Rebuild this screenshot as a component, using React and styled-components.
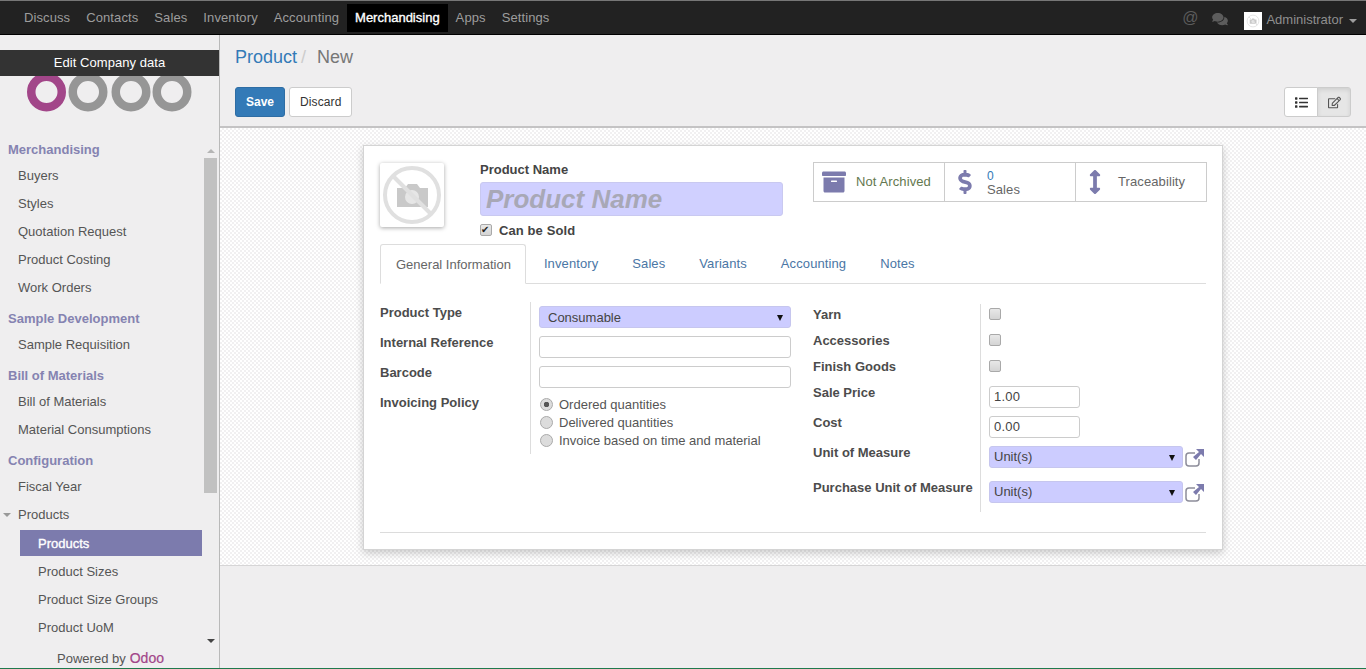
import React from 'react';
import styled, { createGlobalStyle } from 'styled-components';
import { FaArchive, FaDollarSign, FaArrowsAltV, FaList, FaRegEdit, FaComments } from 'react-icons/fa';

const GlobalStyle = createGlobalStyle`
  html, body { margin: 0; padding: 0; height: 100%; overflow: hidden; }
  body {
    font-family: "Liberation Sans", Arial, sans-serif;
    font-size: 13px;
    color: #4c4c4c;
    background: #efeeef;
  }
  * { box-sizing: border-box; }
`;

const Page = styled.div`
  height: 669px;
  display: flex;
  flex-direction: column;
  border-bottom: 1px solid #1f7a4d;
`;

const TopBar = styled.header`
  height: 35px;
  flex: none;
  display: flex;
  align-items: flex-start;
  padding: 3px 0 0 16px;
  background: #222222;
  border-top: 1px solid #777;
  border-bottom: 1px solid #000;
`;

const NavItem = styled.a`
  height: 28px;
  padding: 0 8px 2px;
  display: flex;
  align-items: center;
  font-size: 13px;
  letter-spacing: ${(p) => (p.$active ? '0' : '0.1px')};
  color: ${(p) => (p.$active ? '#fff' : '#9d9d9d')};
  background: ${(p) => (p.$active ? '#000' : 'transparent')};
  -webkit-text-stroke: ${(p) => (p.$active ? '0.35px #fff' : '0')};
`;

const UserArea = styled.div`
  margin-left: auto;
  margin-top: 5px;
  display: flex;
  align-items: center;
  color: #8f8f8f;
  padding-right: 9px;
`;

const AtSign = styled.span`
  font-size: 16px;
  color: #5c5c5c;
  margin: 0 14px 5px 0;
`;

const ChatIcon = styled(FaComments)`
  width: 16px;
  height: 14px;
  color: #5c5c5c;
  margin: 0 16px 3px 0;
`;

const Avatar = styled.span`
  width: 18px;
  height: 18px;
  background: #fff;
  display: flex;
  align-items: center;
  justify-content: center;
  margin-right: 4px;
`;

const UserName = styled.span`
  margin-bottom: 2px;
`;

const Caret = styled.span`
  margin-left: 6px;
  border-top: 4px solid #9d9d9d;
  border-left: 4px solid transparent;
  border-right: 4px solid transparent;
`;

const Body = styled.div`
  flex: 1;
  display: flex;
  min-height: 0;
`;

const Sidebar = styled.aside`
  width: 220px;
  flex: none;
  display: flex;
  flex-direction: column;
  border-right: 1px solid #b9b9b9;
`;

const LogoBox = styled.div`
  position: relative;
  height: 97px;
  flex: none;
  padding-top: 37px;
`;

const EditCompany = styled.div`
  position: absolute;
  top: 15px;
  left: 0;
  right: 0;
  height: 26px;
  padding-bottom: 2px;
  display: flex;
  align-items: center;
  justify-content: center;
  background: #333333;
  color: #fff;
  font-size: 13px;
  letter-spacing: 0.05px;
`;

const MenuRow = styled.div`
  flex: 1;
  min-height: 0;
  display: flex;
`;

const Menu = styled.nav`
  width: 204px;
  flex: none;
  overflow: hidden;
`;

const MenuHeader = styled.div`
  height: 24px;
  margin-top: 5px;
  padding-left: 8px;
  display: flex;
  align-items: center;
  font-size: 13px;
  font-weight: 700;
  color: #8583b1;
`;

const MenuItem = styled.a`
  height: 28px;
  padding-left: 18px;
  display: flex;
  align-items: center;
  position: relative;
  color: #555;
`;

const FoldCaret = styled.span`
  position: absolute;
  left: 3px;
  top: 13px;
  border-top: 4px solid #999;
  border-left: 4px solid transparent;
  border-right: 4px solid transparent;
`;

const SubItem = styled.a`
  height: ${(p) => (p.$active ? '26px' : '28px')};
  margin: ${(p) => (p.$active ? '2px 2px 1px 20px' : '0 2px 0 20px')};
  padding-left: 18px;
  display: flex;
  align-items: center;
  color: ${(p) => (p.$active ? '#fff' : '#555')};
  background: ${(p) => (p.$active ? '#7c7bad' : 'transparent')};
  -webkit-text-stroke: ${(p) => (p.$active ? '0.35px #fff' : '0')};
`;

const ScrollTrack = styled.div`
  width: 13px;
  flex: none;
  margin-top: 11px;
  display: flex;
  flex-direction: column;
  align-items: center;
`;

const ScrollArrow = styled.div`
  height: 15px;
  flex: none;
  display: flex;
  align-items: center;
  justify-content: center;
  &::before {
    content: '';
    border-left: 4px solid transparent;
    border-right: 4px solid transparent;
    ${(p) => (p.$down ? 'border-top: 4px solid #444;' : 'border-bottom: 4px solid #b5b5b5;')}
  }
`;

const ScrollThumb = styled.div`
  width: 13px;
  height: 335px;
  flex: none;
  background: #c1c1c1;
`;

const ScrollGap = styled.div`
  flex: 1;
`;

const SidebarFooter = styled.div`
  height: 20px;
  flex: none;
  display: flex;
  align-items: center;
  justify-content: center;
  gap: 4px;
  padding-left: 2px;
  color: #555;
  b { color: #a24689; font-weight: 400; font-size: 14px; -webkit-text-stroke: 0.2px #a24689; }
`;

const Main = styled.main`
  flex: 1;
  min-width: 0;
  display: flex;
  flex-direction: column;
`;

const ControlPanel = styled.div`
  height: 93px;
  flex: none;
  padding: 0 15px;
  border-bottom: 2px solid #c4c3c4;
`;

const Breadcrumb = styled.div`
  height: 44px;
  margin-bottom: 8px;
  display: flex;
  align-items: center;
  font-size: 18px;
  color: #777;
  a { color: #337ab7; }
  i { color: #ccc; font-style: normal; margin: 0 11px 0 4px; }
`;

const ActionRow = styled.div`
  display: flex;
  align-items: center;
`;

const Button = styled.button`
  height: 30px;
  padding: 0 10px;
  margin-right: 4px;
  font: inherit;
  font-size: 12px;
  letter-spacing: ${(p) => (p.$primary ? '0' : '0.1px')};
  font-weight: ${(p) => (p.$primary ? 700 : 400)};
  color: ${(p) => (p.$primary ? '#fff' : '#333')};
  background: ${(p) => (p.$primary ? '#337ab7' : '#fff')};
  border: 1px solid ${(p) => (p.$primary ? '#2e6da4' : '#ccc')};
  border-radius: 3px;
`;

const ViewSwitch = styled.div`
  margin-left: auto;
  display: flex;
`;

const ViewButton = styled.button`
  width: 34px;
  height: 30px;
  display: flex;
  align-items: center;
  justify-content: center;
  color: ${(p) => (p.$active ? '#555' : '#333')};
  background: ${(p) => (p.$active ? '#e6e6e6' : '#fff')};
  border: 1px solid #ccc;
  border-radius: ${(p) => (p.$active ? '0 3px 3px 0' : '3px 0 0 3px')};
  margin-left: ${(p) => (p.$active ? '-1px' : '0')};
  box-shadow: ${(p) => (p.$active ? 'inset 0 2px 4px rgba(0,0,0,.1)' : 'none')};
`;

const FormBackground = styled.div`
  height: 438px;
  flex: none;
  padding: 17px 0 0;
  border-bottom: 1px solid #d6d5d6;
  background-color: #fff;
  background-image: repeating-conic-gradient(#f1f0f1 0 25%, #fff 0 50%);
  background-size: 4px 4px;
`;

const Sheet = styled.div`
  width: 860px;
  height: 405px;
  margin: 0 auto;
  padding: 16px 15px 0 16px;
  background: #fff;
  border: 1px solid #d4d4d4;
  box-shadow: 0 3px 8px rgba(0, 0, 0, 0.2);
`;

const SheetHead = styled.div`
  display: flex;
  align-items: flex-start;
  height: 82px;
`;

const ImageBox = styled.div`
  width: 64px;
  height: 64px;
  margin-top: 1px;
  background: #fff;
  border-radius: 2px;
  box-shadow: 0 1px 4px rgba(0, 0, 0, 0.35);
  flex: none;
`;

const TitleBlock = styled.div`
  width: 303px;
  margin-left: 36px;
  flex: none;
`;

const TitleLabel = styled.label`
  display: block;
  height: 16px;
  line-height: 16px;
  font-weight: 700;
  color: #444;
`;

const NameInput = styled.input`
  display: block;
  width: 100%;
  height: 34px;
  margin: 4px 0;
  padding: 0 5px;
  border: 1px solid #c9c9f0;
  border-radius: 3px;
  background: #d0d0ff;
  font: italic 700 26px "Liberation Sans", Arial, sans-serif;
  &::placeholder { color: #a8a8b6; opacity: 1; }
`;

const CheckRow = styled.label`
  height: 20px;
  display: flex;
  align-items: center;
  gap: 7px;
  font-weight: 700;
  letter-spacing: 0.1px;
  color: #444;
`;

const Check = styled.input.attrs({ type: 'checkbox' })`
  appearance: none;
  width: 12px;
  height: 12px;
  margin: 0;
  position: relative;
  border: 1px solid #a9a9a9;
  border-radius: 2px;
  background: linear-gradient(#e8e8e8, #d4d4d4);
  &:checked::after {
    content: '✔';
    position: absolute;
    left: 0;
    top: -2px;
    font-size: 10px;
    line-height: 13px;
    color: #222;
  }
`;

const StatBox = styled.div`
  margin-left: auto;
  width: 394px;
  height: 40px;
  display: grid;
  grid-template-columns: 130px 131px 1fr;
  border: 1px solid #ccc;
`;

const Stat = styled.div`
  display: flex;
  align-items: center;
  padding-left: ${(p) => p.$pad || 8}px;
  border-left: ${(p) => (p.$first ? 'none' : '1px solid #ccc')};
  color: ${(p) => p.$color || '#666'};
  letter-spacing: 0.1px;
  svg { color: #7c7bad; flex: none; }
`;

const StatText = styled.div`
  margin: 0 0 2px ${(p) => p.$gap}px;
`;

const StatNumbers = styled.div`
  margin: 2px 0 0 10px;
  line-height: 14px;
  b { display: block; font-size: 12px; font-weight: 400; color: #337ab7; }
`;

const Tabs = styled.div`
  height: 40px;
  margin-right: 1px;
  display: flex;
  border-bottom: 1px solid #ddd;
`;

const Tab = styled.a`
  height: ${(p) => (p.$active ? '40px' : '39px')};
  padding: ${(p) => (p.$active ? '0 14px 0 15px' : '0 16px')};
  margin-right: 2px;
  display: flex;
  align-items: center;
  letter-spacing: ${(p) => (p.$active ? '0' : '0.1px')};
  color: ${(p) => (p.$active ? '#666' : '#4a76a5')};
  background: ${(p) => (p.$active ? '#fff' : 'transparent')};
  border: ${(p) => (p.$active ? '1px solid #ddd' : 'none')};
  border-bottom: ${(p) => (p.$active ? '1px solid #fff' : 'none')};
  border-radius: 3px 3px 0 0;
`;

const Columns = styled.div`
  display: flex;
  align-items: flex-start;
  gap: 22px;
  margin-top: 18px;
`;

const FieldGrid = styled.div`
  display: grid;
  grid-template-columns: ${(p) => p.$labelWidth}px 1fr;
  width: ${(p) => p.$width}px;
  margin-top: ${(p) => p.$top || 0}px;
`;

const FieldLabel = styled.div`
  height: ${(p) => p.$h}px;
  line-height: 22px;
  font-weight: 700;
  color: #4c4c4c;
`;

const FieldCell = styled.div`
  height: ${(p) => p.$h}px;
  padding: ${(p) => p.$top ?? 4}px 0 0 8px;
  border-left: 1px solid #ddd;
  display: flex;
  align-items: flex-start;
  gap: 2px;
`;

const TextInput = styled.input`
  width: ${(p) => p.$w || '100%'};
  height: 22px;
  padding: 0 4px 2px;
  border: 1px solid #ccc;
  border-radius: 3px;
  background: #fff;
  font: 13px "Liberation Sans", Arial, sans-serif;
  letter-spacing: 0.2px;
  color: #444;
`;

const SelectWrap = styled.div`
  position: relative;
  width: ${(p) => p.$w || '100%'};
  height: 22px;
  flex: none;
  &::after {
    content: '';
    position: absolute;
    right: 8px;
    top: 9px;
    border-top: 6px solid #111;
    border-left: 3px solid transparent;
    border-right: 3px solid transparent;
  }
`;

const Select = styled.select`
  appearance: none;
  display: block;
  width: 100%;
  height: 22px;
  padding: 0 ${(p) => p.$pad || 8}px ${(p) => (p.$pad ? 2 : 0)}px;
  border: 1px solid #c6c6ee;
  border-radius: 3px;
  background: #ccccff;
  font: 13px "Liberation Sans", Arial, sans-serif;
  color: #444;
`;

const RadioList = styled.div`
  display: flex;
  flex-direction: column;
`;

const RadioRow = styled.label`
  height: 18px;
  display: flex;
  align-items: center;
  gap: 6px;
  color: #555;
`;

const Radio = styled.input.attrs({ type: 'radio', name: 'invoicing' })`
  appearance: none;
  width: 13px;
  height: 13px;
  margin: 0 0 0 1px;
  border: 1px solid #aaa;
  border-radius: 50%;
  background: #dcdcdc;
  &:checked { background: radial-gradient(circle, #555 0 2.5px, #dcdcdc 3px); }
`;

const Separator = styled.div`
  height: 1px;
  margin: 20px 1px 0 0;
  background: #dcdcdc;
`;

const Filler = styled.div`
  flex: 1;
`;

const ExternalLink = styled.span`
  margin-top: 3px;
  display: flex;
`;

const rings = [46.5, 88, 131, 172];

const Logo = () => (
  <svg width="220" height="42" viewBox="0 0 220 42">
    {rings.map((cx, i) => (
      <circle key={cx} cx={cx} cy="20" r="15.25" fill="none" strokeWidth="8.5" stroke={i === 0 ? '#a24689' : '#969696'} />
    ))}
  </svg>
);

const NoImage = ({ size = 64 }) => (
  <svg width={size} height={size} viewBox="0 0 64 64">
    <circle cx="32" cy="32" r="27" fill="none" stroke="#e0e0e0" strokeWidth="4" />
    <path d="M17 25h8l3-4h9l3 4h8v19H17z" fill="#c9c9c9" />
    <circle cx="32" cy="34" r="7" fill="#e6e6e6" />
    <path d="M13 13l38 38" stroke="#e0e0e0" strokeWidth="4" />
  </svg>
);

const ExternalIcon = () => (
  <svg width="20" height="18" viewBox="0 0 20 18" fill="none">
    <path d="M14 10v4a3 3 0 0 1-3 3H4a3 3 0 0 1-3-3V7a3 3 0 0 1 3-3h6" stroke="#8d8d9a" strokeWidth="1.5" />
    <path d="M11 0h8v8l-3-3-5 6-3-3 6-5z" fill="#7c7bad" />
  </svg>
);

const navItems = ['Discuss', 'Contacts', 'Sales', 'Inventory', 'Accounting', 'Merchandising', 'Apps', 'Settings'];
const tabs = ['General Information', 'Inventory', 'Sales', 'Variants', 'Accounting', 'Notes'];

const menuGroups = [
  { title: 'Merchandising', items: ['Buyers', 'Styles', 'Quotation Request', 'Product Costing', 'Work Orders'] },
  { title: 'Sample Development', items: ['Sample Requisition'] },
  { title: 'Bill of Materials', items: ['Bill of Materials', 'Material Consumptions'] },
  { title: 'Configuration', items: ['Fiscal Year'] },
];

const subItems = ['Products', 'Product Sizes', 'Product Size Groups', 'Product UoM'];

const UnitSelect = () => (
  <SelectWrap $w="194px">
    <Select $pad={4}>
      <option>Unit(s)</option>
    </Select>
  </SelectWrap>
);

const App = () => {
  return (
    <Page>
      <GlobalStyle />
      <TopBar>
        {navItems.map((n) => (
          <NavItem key={n} $active={n === 'Merchandising'}>{n}</NavItem>
        ))}
        <UserArea>
          <AtSign>@</AtSign>
          <ChatIcon />
          <Avatar><NoImage size={14} /></Avatar>
          <UserName>Administrator</UserName>
          <Caret />
        </UserArea>
      </TopBar>

      <Body>
        <Sidebar>
          <LogoBox>
            <Logo />
            <EditCompany>Edit Company data</EditCompany>
          </LogoBox>
          <MenuRow>
            <Menu>
              {menuGroups.map((g) => (
                <div key={g.title}>
                  <MenuHeader>{g.title}</MenuHeader>
                  {g.items.map((m) => <MenuItem key={m}>{m}</MenuItem>)}
                </div>
              ))}
              <MenuItem><FoldCaret />Products</MenuItem>
              {subItems.map((s, i) => (
                <SubItem key={s} $active={i === 0}>{s}</SubItem>
              ))}
            </Menu>
            <ScrollTrack>
              <ScrollArrow />
              <ScrollThumb />
              <ScrollGap />
              <ScrollArrow $down />
            </ScrollTrack>
          </MenuRow>
          <SidebarFooter>Powered by <b>Odoo</b></SidebarFooter>
        </Sidebar>

        <Main>
          <ControlPanel>
            <Breadcrumb>
              <a>Product</a><i>/</i>New
            </Breadcrumb>
            <ActionRow>
              <Button $primary>Save</Button>
              <Button>Discard</Button>
              <ViewSwitch>
                <ViewButton><FaList size={13} /></ViewButton>
                <ViewButton $active><FaRegEdit size={13} /></ViewButton>
              </ViewSwitch>
            </ActionRow>
          </ControlPanel>

          <FormBackground>
            <Sheet>
              <SheetHead>
                <ImageBox><NoImage /></ImageBox>
                <TitleBlock>
                  <TitleLabel>Product Name</TitleLabel>
                  <NameInput placeholder="Product Name" />
                  <CheckRow><Check defaultChecked />Can be Sold</CheckRow>
                </TitleBlock>
                <StatBox>
                  <Stat $first $color="#64784f">
                    <FaArchive size={24} />
                    <StatText $gap={10}>Not Archived</StatText>
                  </Stat>
                  <Stat $pad={8}>
                    <FaDollarSign size={24} />
                    <StatNumbers><b>0</b>Sales</StatNumbers>
                  </Stat>
                  <Stat $pad={7}>
                    <FaArrowsAltV size={24} />
                    <StatText $gap={11}>Traceability</StatText>
                  </Stat>
                </StatBox>
              </SheetHead>

              <Tabs>
                {tabs.map((t, i) => <Tab key={t} $active={i === 0}>{t}</Tab>)}
              </Tabs>

              <Columns>
                <FieldGrid $labelWidth={150} $width={411}>
                  <FieldLabel $h={30}>Product Type</FieldLabel>
                  <FieldCell $h={30}>
                    <SelectWrap><Select><option>Consumable</option></Select></SelectWrap>
                  </FieldCell>
                  <FieldLabel $h={30}>Internal Reference</FieldLabel>
                  <FieldCell $h={30}><TextInput /></FieldCell>
                  <FieldLabel $h={30}>Barcode</FieldLabel>
                  <FieldCell $h={30}><TextInput /></FieldCell>
                  <FieldLabel $h={62}>Invoicing Policy</FieldLabel>
                  <FieldCell $h={62} $top={3}>
                    <RadioList>
                      <RadioRow><Radio defaultChecked />Ordered quantities</RadioRow>
                      <RadioRow><Radio />Delivered quantities</RadioRow>
                      <RadioRow><Radio />Invoice based on time and material</RadioRow>
                    </RadioList>
                  </FieldCell>
                </FieldGrid>

                <FieldGrid $labelWidth={167} $width={393} $top={2}>
                  <FieldLabel $h={26}>Yarn</FieldLabel>
                  <FieldCell $h={26}><Check /></FieldCell>
                  <FieldLabel $h={26}>Accessories</FieldLabel>
                  <FieldCell $h={26}><Check /></FieldCell>
                  <FieldLabel $h={26}>Finish Goods</FieldLabel>
                  <FieldCell $h={26}><Check /></FieldCell>
                  <FieldLabel $h={30}>Sale Price</FieldLabel>
                  <FieldCell $h={30}><TextInput $w="91px" defaultValue="1.00" /></FieldCell>
                  <FieldLabel $h={30}>Cost</FieldLabel>
                  <FieldCell $h={30}><TextInput $w="91px" defaultValue="0.00" /></FieldCell>
                  <FieldLabel $h={35}>Unit of Measure</FieldLabel>
                  <FieldCell $h={35}><UnitSelect /><ExternalLink><ExternalIcon /></ExternalLink></FieldCell>
                  <FieldLabel $h={35}>Purchase Unit of Measure</FieldLabel>
                  <FieldCell $h={35}><UnitSelect /><ExternalLink><ExternalIcon /></ExternalLink></FieldCell>
                </FieldGrid>
              </Columns>

              <Separator />
            </Sheet>
          </FormBackground>
          <Filler />
        </Main>
      </Body>
    </Page>
  );
};

export default App;
